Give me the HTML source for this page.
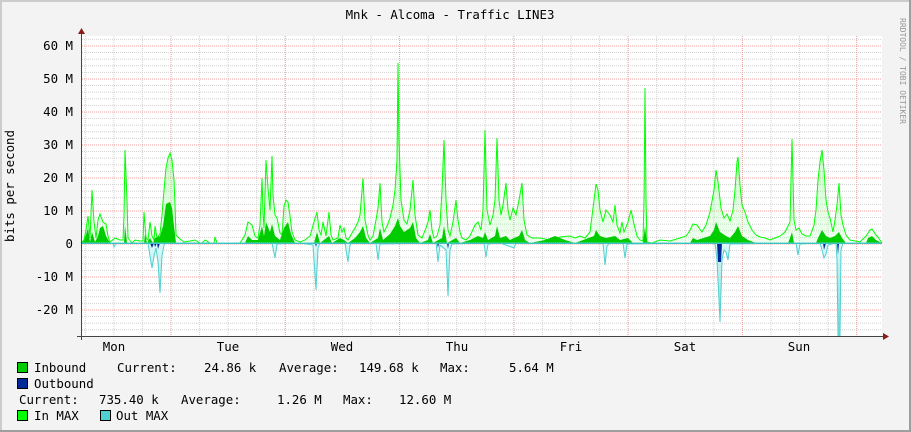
<!DOCTYPE html>
<html><head><meta charset="utf-8"><style>
html,body{margin:0;padding:0;background:#f3f3f3}
svg{display:block}
text{font-family:"DejaVu Sans Mono","Liberation Mono",monospace;font-size:12.4px;fill:#000}
</style></head><body>
<svg width="911" height="432" viewBox="0 0 911 432" xmlns="http://www.w3.org/2000/svg">
<defs>
<pattern id="hmin" patternUnits="userSpaceOnUse" x="0" y="243.5" width="911" height="6.6"><line x1="0" y1="0.5" x2="911" y2="0.5" stroke="#d0d0d0" stroke-width="1" stroke-dasharray="1,1"/></pattern>
<pattern id="vmin" patternUnits="userSpaceOnUse" x="170.5" y="0" width="28.57" height="432"><line x1="0.5" y1="0" x2="0.5" y2="432" stroke="#d0d0d0" stroke-width="1" stroke-dasharray="1,1"/></pattern>
<pattern id="hmaj" patternUnits="userSpaceOnUse" x="0" y="243.5" width="911" height="33"><line x1="0" y1="0.5" x2="911" y2="0.5" stroke="#f0a0a0" stroke-width="1" stroke-dasharray="1,1"/></pattern>
<pattern id="vmaj" patternUnits="userSpaceOnUse" x="170.5" y="0" width="114.28" height="432"><line x1="0.5" y1="0" x2="0.5" y2="432" stroke="#f0a0a0" stroke-width="1" stroke-dasharray="1,1"/></pattern>
<linearGradient id="gin" x1="0" y1="0" x2="0" y2="1"><stop offset="0" stop-color="#00ff00" stop-opacity="0.45"/><stop offset="1" stop-color="#c0ffc0" stop-opacity="0.25"/></linearGradient>
<linearGradient id="gout" x1="0" y1="0" x2="0" y2="1"><stop offset="0" stop-color="#e0f8f8"/><stop offset="1" stop-color="#70d8d8"/></linearGradient>
</defs>
<rect x="0" y="0" width="911" height="432" fill="#f3f3f3"/>
<rect x="0" y="0" width="911" height="2" fill="#cccccc"/>
<rect x="0" y="0" width="2" height="432" fill="#cccccc"/>
<rect x="909" y="0" width="2" height="432" fill="#9e9e9e"/>
<rect x="0" y="430" width="911" height="2" fill="#9e9e9e"/>
<rect x="81" y="36" width="801" height="300" fill="#ffffff"/>
<g>
<rect x="82" y="36" width="800" height="300" fill="url(#hmin)"/>
<rect x="82" y="36" width="800" height="300" fill="url(#vmin)"/>
<rect x="82" y="36" width="800" height="300" fill="url(#hmaj)"/>
<rect x="82" y="36" width="800" height="300" fill="url(#vmaj)"/>
</g>
<polygon fill="url(#gin)" points="81,243 84,240 86,230 88,216 90,238 92,190 94,222 96,238 98,220 100,214 103,222 106,224 108,236 110,242 115,238 120,240 123,240 124,215 125,150 127,200 128,238 132,243 135,240 140,241 143,241 144,212 146,238 148,240 150,222 152,236 154,240 155,226 157,238 160,234 162,215 164,190 166,168 168,158 170,153 172,160 174,180 175,205 176,235 179,238 184,242 190,241 195,240 200,243 202,243 205,240 210,243 214,243 215,237 217,243 225,243 240,243 245,235 248,222 252,225 255,236 258,238 260,225 262,178 263,212 264,228 266,160 268,188 270,210 272,156 273,195 275,215 277,218 280,233 282,235 284,206 286,200 288,202 290,216 292,232 295,240 300,242 305,240 310,236 314,222 317,212 319,230 321,235 323,222 326,236 329,212 331,235 333,240 338,238 340,225 342,232 344,228 346,238 348,240 352,233 355,228 358,222 360,215 363,178 365,220 368,235 370,240 373,236 376,220 378,208 380,183 382,222 384,232 387,226 390,218 393,205 395,190 397,160 398,63 399,140 401,200 404,220 407,224 410,210 413,180 415,215 418,235 422,238 426,228 428,222 430,210 432,230 434,238 437,236 440,225 442,190 444,140 446,200 448,230 450,236 453,222 456,200 458,220 460,232 462,238 466,240 470,236 475,225 478,222 481,230 483,210 485,130 487,210 490,225 493,215 495,200 497,138 499,200 501,215 503,205 506,183 508,210 510,220 513,208 516,215 519,200 522,183 524,220 527,235 532,238 540,238 550,240 560,237 570,236 575,238 580,236 585,238 590,232 594,200 596,184 598,190 600,210 603,222 606,210 610,215 613,222 615,205 617,225 620,233 622,222 624,232 628,222 631,210 634,224 637,236 640,240 643,241 644,200 645,88 646,200 647,242 652,243 660,240 670,241 680,238 686,236 689,232 693,224 697,225 702,232 706,225 710,212 714,190 716,170 718,182 721,208 724,218 727,214 730,221 733,210 735,190 737,162 738,157 740,185 742,205 745,212 748,222 752,230 756,235 760,237 765,238 770,240 775,238 780,236 785,232 790,222 792,139 794,220 796,230 799,228 802,234 806,236 810,236 814,225 816,210 818,180 820,162 822,150 824,170 826,200 828,212 830,218 833,232 835,220 837,205 839,183 841,215 843,225 846,235 850,240 855,241 860,242 866,236 868,233 870,230 872,229 874,232 876,235 878,237 880,240 882,243"/>
<polyline fill="none" stroke="#00ff00" stroke-width="1" points="81,243 84,240 86,230 88,216 90,238 92,190 94,222 96,238 98,220 100,214 103,222 106,224 108,236 110,242 115,238 120,240 123,240 124,215 125,150 127,200 128,238 132,243 135,240 140,241 143,241 144,212 146,238 148,240 150,222 152,236 154,240 155,226 157,238 160,234 162,215 164,190 166,168 168,158 170,153 172,160 174,180 175,205 176,235 179,238 184,242 190,241 195,240 200,243 202,243 205,240 210,243 214,243 215,237 217,243 225,243 240,243 245,235 248,222 252,225 255,236 258,238 260,225 262,178 263,212 264,228 266,160 268,188 270,210 272,156 273,195 275,215 277,218 280,233 282,235 284,206 286,200 288,202 290,216 292,232 295,240 300,242 305,240 310,236 314,222 317,212 319,230 321,235 323,222 326,236 329,212 331,235 333,240 338,238 340,225 342,232 344,228 346,238 348,240 352,233 355,228 358,222 360,215 363,178 365,220 368,235 370,240 373,236 376,220 378,208 380,183 382,222 384,232 387,226 390,218 393,205 395,190 397,160 398,63 399,140 401,200 404,220 407,224 410,210 413,180 415,215 418,235 422,238 426,228 428,222 430,210 432,230 434,238 437,236 440,225 442,190 444,140 446,200 448,230 450,236 453,222 456,200 458,220 460,232 462,238 466,240 470,236 475,225 478,222 481,230 483,210 485,130 487,210 490,225 493,215 495,200 497,138 499,200 501,215 503,205 506,183 508,210 510,220 513,208 516,215 519,200 522,183 524,220 527,235 532,238 540,238 550,240 560,237 570,236 575,238 580,236 585,238 590,232 594,200 596,184 598,190 600,210 603,222 606,210 610,215 613,222 615,205 617,225 620,233 622,222 624,232 628,222 631,210 634,224 637,236 640,240 643,241 644,200 645,88 646,200 647,242 652,243 660,240 670,241 680,238 686,236 689,232 693,224 697,225 702,232 706,225 710,212 714,190 716,170 718,182 721,208 724,218 727,214 730,221 733,210 735,190 737,162 738,157 740,185 742,205 745,212 748,222 752,230 756,235 760,237 765,238 770,240 775,238 780,236 785,232 790,222 792,139 794,220 796,230 799,228 802,234 806,236 810,236 814,225 816,210 818,180 820,162 822,150 824,170 826,200 828,212 830,218 833,232 835,220 837,205 839,183 841,215 843,225 846,235 850,240 855,241 860,242 866,236 868,233 870,230 872,229 874,232 876,235 878,237 880,240 882,243"/>
<polygon fill="#00cc00" points="81,243 84,241 88,228 90,242 92,232 95,242 98,236 100,228 103,226 106,236 110,243 124,243 125,225 127,243 144,243 145,234 147,243 150,238 153,243 155,238 160,236 163,226 166,204 170,202 172,208 174,226 176,243 245,243 248,236 252,240 258,240 262,226 264,236 266,222 270,232 272,224 275,236 280,240 284,228 288,222 291,234 295,243 314,243 317,232 320,243 329,236 332,243 340,238 344,240 348,243 355,238 360,232 363,226 366,238 370,243 378,238 380,228 383,240 390,234 395,226 398,218 400,226 404,232 410,228 413,222 416,238 420,243 428,240 430,234 433,243 442,238 444,226 447,243 456,238 460,243 470,240 478,236 483,238 485,232 488,240 495,236 497,226 500,238 506,236 510,240 514,238 519,236 522,230 525,240 530,243 545,240 555,236 565,240 575,243 594,236 596,230 600,236 606,238 615,236 620,240 628,238 633,243 643,243 645,226 647,243 690,243 693,238 697,240 710,236 714,230 716,222 720,232 726,236 730,238 735,232 738,226 742,236 748,240 756,243 788,243 790,238 792,232 794,243 816,243 818,238 822,230 826,236 830,238 835,236 839,232 842,238 846,243 866,243 868,238 872,236 876,240 882,243"/>
<polygon fill="url(#gout)" stroke="#50d0d0" stroke-width="1" points="81,243 113,243 114,247 116,243 148,243 150,256 152,268 154,256 156,248 158,262 160,293 162,256 164,245 166,243 272,243 275,258 277,244 300,243 313,245 316,290 318,248 320,243 345,243 348,262 350,245 352,243 376,243 378,260 380,244 436,243 438,262 440,245 446,250 448,296 450,250 452,244 484,243 486,257 488,244 500,243 514,248 516,243 603,243 605,265 607,246 610,243 623,243 625,258 627,244 715,243 717,260 719,300 720,322 722,260 724,250 726,252 728,260 730,244 796,243 798,255 800,244 820,243 822,250 824,258 826,254 828,245 836,243 837,260 838,336 840,336 841,250 843,243 882,243"/>
<polygon fill="#002a97" points="81,243 150,243 152,248 154,243 155,247 157,243 158,249 160,243 315,243 316,247 317,243 437,243 438,248 439,243 447,243 448,249 449,243 717,243 718,262 721,262 722,243 823,243 824,250 826,243 837,243 838,255 839,243 882,243"/>
<line x1="81" y1="243.5" x2="882" y2="243.5" stroke="#40c0c0" stroke-width="1"/>
<line x1="81.5" y1="340" x2="81.5" y2="33" stroke="#444" stroke-width="1"/>
<polygon points="78,34 85,34 81.5,28" fill="#8b1a1a"/>
<line x1="77" y1="336.5" x2="884" y2="336.5" stroke="#444" stroke-width="1"/>
<polygon points="883,333 883,340 889,336.5" fill="#8b1a1a"/>
<g text-anchor="end">
<text x="73" y="50">60 M</text>
<text x="73" y="83">50 M</text>
<text x="73" y="116">40 M</text>
<text x="73" y="149">30 M</text>
<text x="73" y="182">20 M</text>
<text x="73" y="215">10 M</text>
<text x="73" y="248">0</text>
<text x="73" y="281">-10 M</text>
<text x="73" y="314">-20 M</text>
</g>
<g text-anchor="middle">
<text x="114" y="351">Mon</text>
<text x="228" y="351">Tue</text>
<text x="342" y="351">Wed</text>
<text x="457" y="351">Thu</text>
<text x="571" y="351">Fri</text>
<text x="685" y="351">Sat</text>
<text x="799" y="351">Sun</text>
<text x="450" y="19">Mnk - Alcoma - Traffic LINE3</text>
<text transform="translate(14,186) rotate(-90)">bits per second</text>
</g>
<text transform="translate(900,18) rotate(90)" style="font-size:8px;fill:#999">RRDTOOL / TOBI OETIKER</text>
<rect x="17.5" y="362.5" width="10" height="10" fill="#00cc00" stroke="#000"/>
<text x="34" y="372">Inbound</text>
<text x="117" y="372">Current:</text>
<text x="204" y="372">24.86 k</text>
<text x="279" y="372">Average:</text>
<text x="359" y="372">149.68 k</text>
<text x="440" y="372">Max:</text>
<text x="509" y="372">5.64 M</text>
<rect x="17.5" y="378.5" width="10" height="10" fill="#002a97" stroke="#000"/>
<text x="34" y="388">Outbound</text>
<text x="19" y="404">Current:</text>
<text x="99" y="404">735.40 k</text>
<text x="181" y="404">Average:</text>
<text x="277" y="404">1.26 M</text>
<text x="343" y="404">Max:</text>
<text x="399" y="404">12.60 M</text>
<rect x="17.5" y="410.5" width="10" height="10" fill="#00ff00" stroke="#000"/>
<text x="34" y="420">In MAX</text>
<rect x="100.5" y="410.5" width="10" height="10" fill="#50d0d0" stroke="#000"/>
<text x="116" y="420">Out MAX</text>
</svg>
</body></html>
